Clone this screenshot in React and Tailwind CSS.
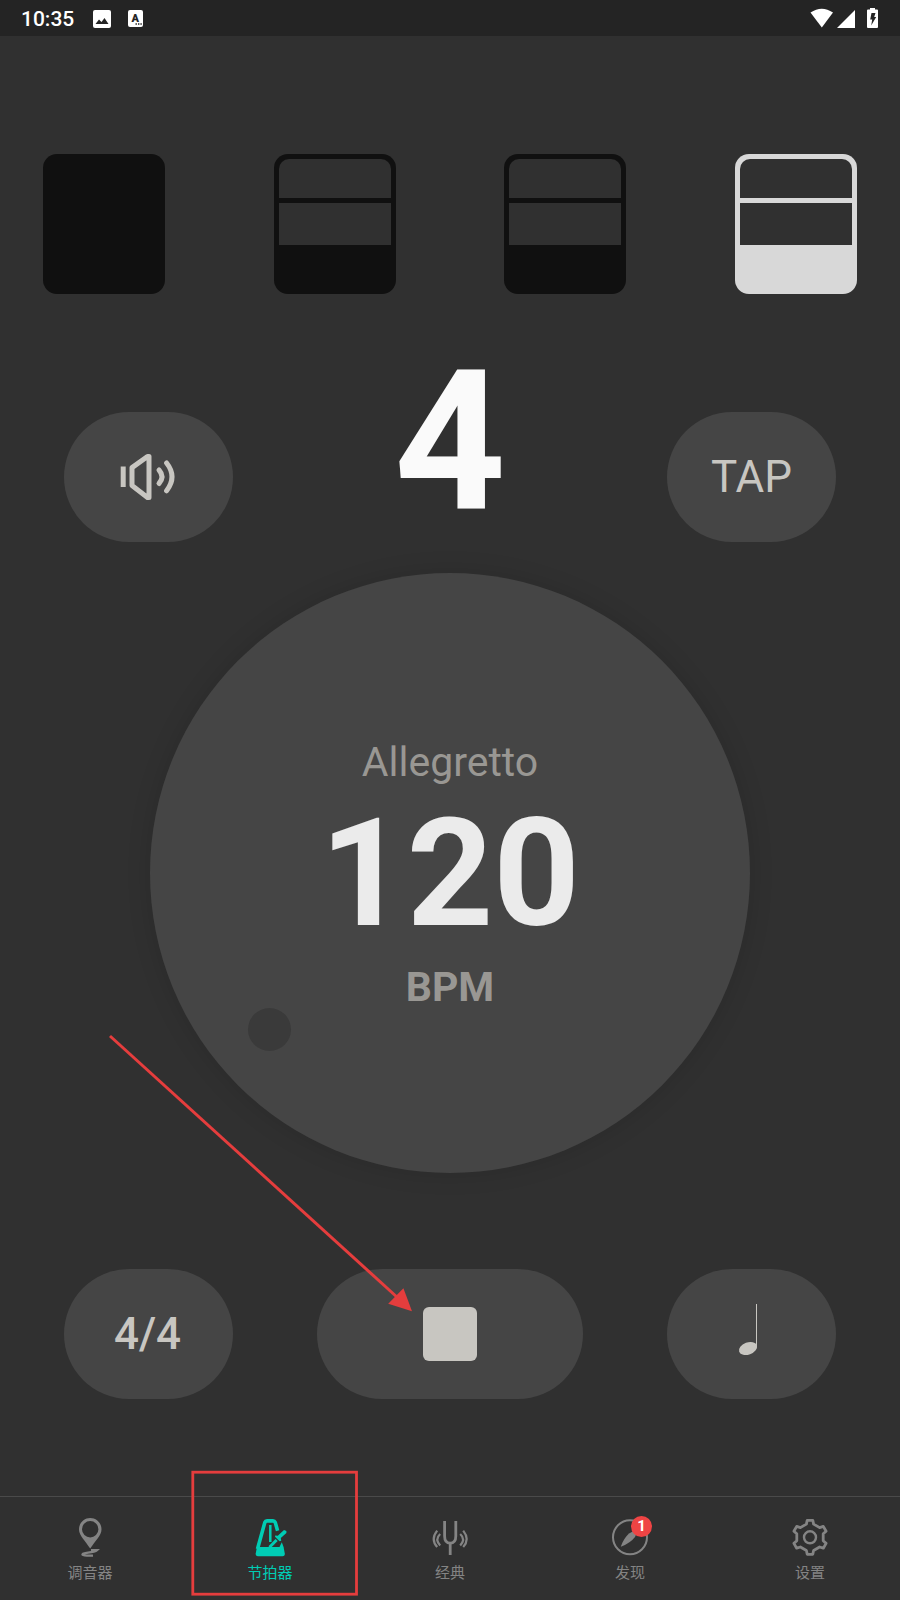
import React from "react";

const beats = [
  { id: 1, full: true, fill: "bg-[#101010]" },
  { id: 2, full: false, fill: "bg-[#101010]" },
  { id: 3, full: false, fill: "bg-[#101010]" },
  { id: 4, full: false, fill: "bg-[#d8d8d8]" },
];

function StatusBar() {
  return (
    <header className="h-9 bg-[#242424] flex items-center justify-between pl-[21px] pr-[22px] text-white">
      <div className="flex items-center pt-px">
        <span className="w-[72px] pt-px text-[21px] leading-none font-medium">10:35</span>
        <svg width="18" height="18" viewBox="0 0 18 18">
          <rect width="18" height="18" rx="2" fill="#fff" />
          <path d="M2.5 14 L6 9.5 L8.5 12 L11.5 8 L15.5 14 Z" fill="#242424" />
        </svg>
        <svg className="ml-[17px]" width="15" height="17" viewBox="0 0 15 17">
          <rect width="15" height="17" rx="2" fill="#fff" />
          <text x="7.2" y="12.3" textAnchor="middle" fontSize="11" fontWeight="900" fill="#242424">A</text>
          <path d="M7.5 14h1.4M10 14h1.4M12.4 14h1.4" stroke="#242424" strokeWidth="1.4" />
        </svg>
      </div>
      <svg className="-mt-px" width="68" height="20" viewBox="0 0 68 20" fill="#fff">
        <path d="M0.5 4.6 Q11.7 -3 23 4.6 L11.8 19.5 Z" />
        <path d="M45 2 V20 H27 Z" />
        <path d="M60 0h5v1.5h2q1 0 1 1V19q0 1-1 1h-9q-1 0-1-1V2.5q0-1 1-1h2Z" />
        <path d="M61.5 5h4l-1.3 4h2l-5 8.5 1-6h-2Z" fill="#242424" />
      </svg>
    </header>
  );
}

function Beat({ beat }) {
  return (
    <div className={`w-[122px] h-[140px] rounded-[14px] p-[5px] flex flex-col gap-[5px] ${beat.fill}`}>
      {!beat.full && (
        <>
          <div className="h-[39px] rounded-t-[10px] bg-[#303030]" />
          <div className="h-[42px] bg-[#303030]" />
        </>
      )}
    </div>
  );
}

function Pill({ wide, children }) {
  return (
    <button
      className={`h-[130px] rounded-full bg-[#454545] text-[#c8c6c1] flex items-center justify-center ${wide ? "w-[266px]" : "w-[169px]"}`}
    >
      {children}
    </button>
  );
}

function SpeakerIcon() {
  return (
    <svg className="mr-px" width="60" height="60" viewBox="0 0 60 60" fill="none" stroke="currentColor" strokeWidth="5" strokeLinejoin="round">
      <path d="M5.2 19.5V40" />
      <path d="M14 20.6 L29.5 9.5 H31 V50.5 H29.5 L14 38.6 Z" />
      <path d="M41 23 Q47 29.7 41 36.5" strokeLinecap="round" />
      <path d="M48.6 16 Q59.4 29.7 48.6 43.8" strokeLinecap="round" />
    </svg>
  );
}

function NoteIcon() {
  return (
    <svg width="30" height="60" viewBox="0 0 30 60" fill="currentColor">
      <rect x="19" y="0" width="1" height="43" />
      <ellipse cx="11" cy="44.5" rx="9.4" ry="6" transform="rotate(-20 11 44.5)" />
    </svg>
  );
}

function PinIcon() {
  return (
    <svg width="44" height="44" viewBox="0 0 44 44" fill="currentColor">
      <path
        fillRule="evenodd"
        d="M22.2 3 C28.6 3 33.5 8 33.5 14.4 C33.5 20.5 27 26 22.2 33.5 C17.5 26 11 20.5 11 14.4 C11 8 16 3 22.2 3 Z M22.2 6 A8.2 8.2 0 1 0 22.2 22.4 A8.2 8.2 0 1 0 22.2 6 Z"
      />
      <path
        d="M23 35.2 H29 Q27 37 20 37.7 Q14 38.7 14.5 39.6 Q16 41 25 40.6"
        fill="none"
        stroke="currentColor"
        strokeWidth="2.3"
      />
    </svg>
  );
}

function MetronomeIcon() {
  return (
    <svg width="44" height="44" viewBox="0 0 44 44" fill="none" stroke="currentColor">
      <path d="M9.5 34 L16.8 7.5 Q17.4 5.9 19 5.9 H25 Q26.6 5.9 27.3 7.5 L29.6 15.8" strokeWidth="3.6" />
      <path d="M9 32 H35.6 L36.8 38.5 Q37 41.2 34.5 41.2 H10 Q7.5 41.2 7.7 38.5 Z" fill="currentColor" stroke="none" />
      <path d="M22.3 10 V27" strokeWidth="2.5" />
      <path d="M21.5 32.3 L28.6 25" strokeWidth="3" />
      <path d="M27.2 20.6 L29.8 20.8 L36 15 L38.4 16 V18 L32.8 23 L33.2 25.8 L31.6 26.2 L27 21.8 Z" fill="currentColor" stroke="none" />
      <path d="M31.5 32 L33.8 27.3 L35.6 32 Z" fill="currentColor" stroke="none" />
    </svg>
  );
}

function ForkIcon() {
  return (
    <svg width="44" height="44" viewBox="0 0 44 44" fill="none" stroke="currentColor">
      <path d="M16.6 6 V21 Q16.6 28.2 22.2 28.2 Q27.8 28.2 27.8 21 V6" strokeWidth="2.8" />
      <path d="M22.2 28 V40" strokeWidth="2.8" />
      <path d="M12.2 19 Q6.5 24.3 12.2 30.5 M32.2 19 Q37.9 24.3 32.2 30.5" strokeWidth="2.2" />
      <path d="M9.2 15.6 Q2.2 24.3 9.2 32 M35.2 15.6 Q42.2 24.3 35.2 32" strokeWidth="2.2" />
    </svg>
  );
}

function CompassIcon() {
  return (
    <svg width="44" height="44" viewBox="0 0 44 44" fill="none">
      <circle cx="22" cy="22.3" r="17" stroke="currentColor" strokeWidth="2" />
      <path d="M12.8 31.8 Q15.5 23.5 21 18.5 L31 13 L27 22 Q22.5 28 12.8 31.8 Z" fill="currentColor" />
    </svg>
  );
}

function GearIcon() {
  return (
    <svg width="44" height="44" viewBox="-22 -22.3 44 44" fill="none" stroke="currentColor" strokeLinejoin="round">
      <path
        d="M-2.8 -17 H2.8 L3.6 -13.2 L9.6 -9.7 L13.3 -10.9 L16.1 -6.1 L13.2 -3.5 V3.5 L16.1 6.1 L13.3 10.9 L9.6 9.7 L3.6 13.2 L2.8 17 H-2.8 L-3.6 13.2 L-9.6 9.7 L-13.3 10.9 L-16.1 6.1 L-13.2 3.5 V-3.5 L-16.1 -6.1 L-13.3 -10.9 L-9.6 -9.7 L-3.6 -13.2 Z"
        strokeWidth="2.8"
      />
      <circle r="6" strokeWidth="2.4" />
    </svg>
  );
}

const tabs = [
  { label: "调音器", icon: PinIcon },
  { label: "节拍器", icon: MetronomeIcon, active: true },
  { label: "经典", icon: ForkIcon },
  { label: "发现", icon: CompassIcon, badge: 1 },
  { label: "设置", icon: GearIcon },
];

function TabBar() {
  return (
    <nav className="h-[104px] border-t border-[#4a4a4a] flex">
      {tabs.map(({ label, icon: Icon, active, badge }) => (
        <div
          key={label}
          className={`flex-1 pt-[18px] flex flex-col items-center ${active ? "text-[#00ccb4]" : "text-[#848484]"}`}
        >
          <div className="relative">
            <Icon />
            {badge && (
              <span className="absolute top-[1px] left-[23px] w-[21px] h-[21px] rounded-full bg-[#ef4444] text-white text-[15px] leading-[21px] font-bold text-center">
                {badge}
              </span>
            )}
          </div>
          <span className="mt-1 text-[15px] leading-5">{label}</span>
        </div>
      ))}
    </nav>
  );
}

export default function App() {
  return (
    <div className="relative w-[900px] h-[1600px] bg-[#303030] flex flex-col overflow-hidden font-[Roboto,'Noto_Sans_CJK_SC',sans-serif]">
      <StatusBar />

      <main className="flex-1 flex flex-col">
        {/* Beat accents */}
        <div className="pt-[118px] px-[43px] flex justify-between">
          {beats.map((beat) => (
            <Beat key={beat.id} beat={beat} />
          ))}
        </div>

        {/* Sound, current beat, tap */}
        <div className="mt-[118px] h-[130px] px-16 flex items-center justify-between">
          <Pill>
            <SpeakerIcon />
          </Pill>
          <div className="mb-[72px] text-[195px] leading-none font-bold text-[#fafafa]">4</div>
          <Pill>
            <span className="text-[44px] leading-none">TAP</span>
          </Pill>
        </div>

        {/* Tempo dial */}
        <div className="relative mt-[31px] mx-auto w-[600px] h-[600px] rounded-full bg-[#454545] shadow-[0_0_24px_rgba(0,0,0,0.13)] flex flex-col items-center pt-[165px]">
          <div className="text-[41px] leading-[48px] text-[#999793]">Allegretto</div>
          <div className="mt-[13px] text-[151px] leading-[150px] font-bold text-[#ebebeb]">120</div>
          <div className="mt-[14px] text-[41px] leading-[48px] font-bold text-[#999793]">BPM</div>
          <div className="absolute left-[98px] top-[435px] w-[43px] h-[43px] rounded-full bg-[#3a3a3a]" />
        </div>

        {/* Meter, stop, note value */}
        <div className="mt-24 px-16 flex justify-between">
          <Pill>
            <span className="mb-px mr-[2px] text-[44px] leading-none font-medium">4/4</span>
          </Pill>
          <Pill wide>
            <span className="w-[54px] h-[54px] rounded-md bg-[#c8c6c1]" />
          </Pill>
          <Pill>
            <NoteIcon />
          </Pill>
        </div>
      </main>

      <TabBar />

      {/* Hint arrow and highlight frame */}
      <svg className="absolute inset-0 pointer-events-none" width="900" height="1600" viewBox="0 0 900 1600" fill="none">
        <path d="M110 1036 L398 1298" stroke="#e53d3d" strokeWidth="3" />
        <path d="M412 1311.2 L403.4 1288.3 L388.2 1303.7 Z" fill="#e53d3d" />
        <rect x="192.8" y="1472.2" width="163.7" height="122" stroke="#e53d3d" strokeWidth="2.8" />
      </svg>
    </div>
  );
}
